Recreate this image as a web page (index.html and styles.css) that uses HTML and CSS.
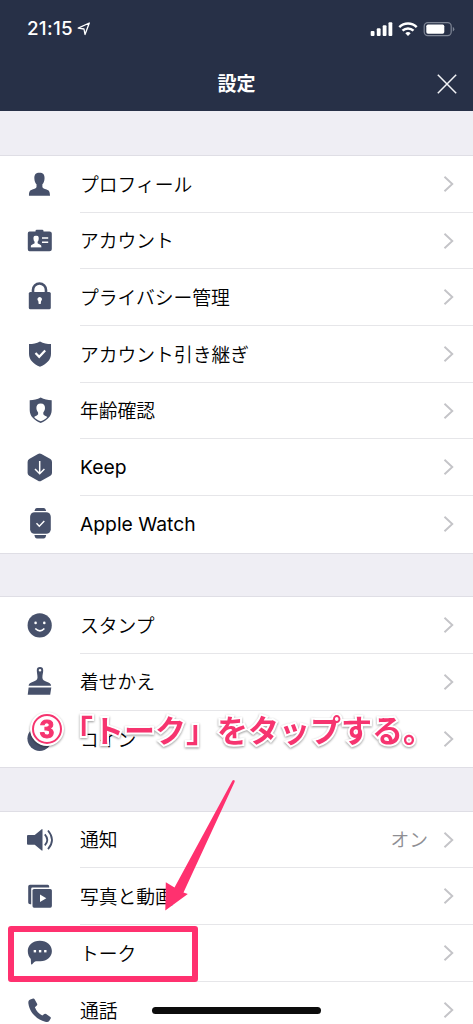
FILE: index.html
```html
<!DOCTYPE html>
<html lang="ja">
<head>
<meta charset="utf-8">
<title>設定</title>
<link rel="stylesheet" href="styles.css">
</head>
<body>
<svg class="defs" width="0" height="0"><defs>
<symbol id="chev" viewBox="0 0 12 18"><path d="M1.500 1.700 9.300 9l-7.800 7.300" fill="none" stroke="#c4c4c8" stroke-width="1.900"/></symbol>
<symbol id="bust" viewBox="0 0 22 24"><path d="M11 0C7.300 0 5.600 2.400 5.800 6c.1 2.500.8 4.500 2.200 6v2.600c-.2 1.300-2 1.800-4.300 2.700C1 18.300.3 19.500.2 23.600h21.600c-.1-4.100-.8-5.300-3.500-6.300-2.300-.9-4.100-1.400-4.300-2.700V12c1.400-1.500 2.100-3.500 2.200-6C16.400 2.400 14.700 0 11 0Z"/></symbol>
</defs></svg>
<div class="phone">
  <header class="header">
    <div class="status">
      <div class="clock"><span>21:15</span>
        <svg width="14" height="14" viewBox="0 0 14 14"><path d="M1.200 6.200 12.300 1 8 12.500 7 7Z" fill="none" stroke="#fff" stroke-width="1.300" stroke-linejoin="round"/></svg>
      </div>
      <svg class="signals" width="86" height="16" viewBox="0 0 86 16">
        <g fill="#fff"><rect x=".7" y="10" width="3.800" height="5" rx="1"/><rect x="6.800" y="7.300" width="3.800" height="7.700" rx="1"/><rect x="12.700" y="4.300" width="3.800" height="10.700" rx="1"/><rect x="18.500" y="1.200" width="3.800" height="13.800" rx="1"/></g>
        <g fill="none" stroke="#fff" stroke-width="2.500"><path d="M29.300 6.100a12.500 12.500 0 0 1 17.400 0M32.500 9.700a8 8 0 0 1 11 0"/></g>
        <path d="M38 15l-2.700-2.700a4 4 0 0 1 5.400 0Z" fill="#fff"/>
        <rect x="54.200" y="1.600" width="27" height="13" rx="3.600" fill="none" stroke="#7e8595" stroke-width="1.200"/>
        <rect x="56.300" y="3.600" width="18" height="9.200" rx="1.700" fill="#fff"/>
        <path d="M82.800 6v4.400q1.500-.6 1.500-2.200T82.800 6Z" fill="#7e8595"/>
      </svg>
    </div>
    <div class="titlebar"><h1>設定</h1>
      <svg class="close" width="20" height="20" viewBox="0 0 20 20"><path d="m.8.8 18.400 18.400M19.200.8.8 19.200" stroke="#f2f3f6" stroke-width="1.500"/></svg>
    </div>
  </header>

  <main>
  <section class="group">
    <div class="row"><svg class="icon" viewBox="0 0 40 40"><use href="#bust" x="8.700" y="8.600" width="21.500" height="23.500"/></svg><div class="cell"><span>プロフィール</span><svg class="chev"><use href="#chev"/></svg></div></div>
    <div class="row"><svg class="icon" viewBox="0 0 40 40"><path d="M9.500 10.500h6V10q0-1.300 1.300-1.300h5.400q1.300 0 1.300 1.300v.5h6q2.300 0 2.300 2v15.700q0 2-2.300 2h-20q-1.700 0-1.700-2V12.500q0-2 1.700-2Z"/><use class="white" href="#bust" x="10.500" y="14.600" width="11.200" height="12.200"/><path d="M22 17h6.200M22 21.300h6.200" stroke="#fff" stroke-width="1.600"/></svg><div class="cell"><span>アカウント</span><svg class="chev"><use href="#chev"/></svg></div></div>
    <div class="row"><svg class="icon" viewBox="0 0 40 40"><path d="M13 15v-3a6.500 6.500 0 0 1 13 0v3" fill="none" stroke="#47516b" stroke-width="2.600"/><rect x="8.800" y="13.900" width="22" height="17.400" rx="1.600"/><path class="white" d="M19.700 19a2.300 2.300 0 0 1 1.400 4.100l-.4 3h-2l-.4-3a2.300 2.300 0 0 1 1.400-4.100Z"/></svg><div class="cell"><span>プライバシー管理</span><svg class="chev"><use href="#chev"/></svg></div></div>
    <div class="row"><svg class="icon" viewBox="0 0 40 40"><path d="M20 7.400c3.500 1.800 7 2.400 11 2.700v9.700c0 6.300-4.600 10.300-11 13-6.400-2.700-11-6.700-11-13v-9.700c4-.3 7.500-.9 11-2.700Z"/><path d="m15.500 19 3.700 3.800 6-6.200" fill="none" stroke="#fff" stroke-width="2.200"/></svg><div class="cell"><span>アカウント引き継ぎ</span><svg class="chev"><use href="#chev"/></svg></div></div>
    <div class="row"><svg class="icon" viewBox="0 0 40 40"><path d="M20.700 6.600c3.500 1.800 7 2.400 11 2.700V19c0 6.300-4.600 10.300-11 13-6.400-2.700-11-6.700-11-13V9.300c4-.3 7.500-.9 11-2.700Z"/><path class="white" d="M20.700 12.500c-3 0-4.400 1.800-4.300 4.600.1 2 .8 3.500 1.700 4.400v1.700c-.6 1.300-2.600 1.500-4 2.700 1.700 2.200 3.700 3.300 6.600 4.400 2.900-1.100 4.900-2.200 6.600-4.400-1.400-1.200-3.400-1.400-4-2.700v-1.700c.9-.9 1.600-2.400 1.700-4.400.1-2.800-1.300-4.600-4.300-4.600Z"/></svg><div class="cell"><span>年齢確認</span><svg class="chev"><use href="#chev"/></svg></div></div>
    <div class="row"><svg class="icon" viewBox="0 0 40 40"><path d="M18 6.100q1.700-1 3.400 0l9 5q1.600 1 1.600 2.800v11q0 1.800-1.600 2.800l-9 5q-1.700 1-3.400 0l-8.800-5q-1.600-1-1.600-2.800v-11q0-1.800 1.600-2.800Z"/><path d="M19.700 13v12.500m-4.700-4.500 4.700 4.700 4.700-4.700" fill="none" stroke="#fff" stroke-width="1.500"/></svg><div class="cell"><span class="latin">Keep</span><svg class="chev"><use href="#chev"/></svg></div></div>
    <div class="row"><svg class="icon" viewBox="0 0 40 40"><rect x="10.100" y="8.300" width="20.700" height="21.500" rx="4.500"/><path d="M14.400 7q.6-3 2.500-3h6.800q1.900 0 2.500 3ZM14.400 31.100h11.800q-.6 3.500-2.500 3.500h-6.800q-1.900 0-2.500-3.500Z"/><path d="m16.500 19.200 2.800 3 5-5.300" fill="none" stroke="#fff" stroke-width="1.400"/></svg><div class="cell"><span class="latin">Apple Watch</span><svg class="chev"><use href="#chev"/></svg></div></div>
  </section>

  <section class="group">
    <div class="row"><svg class="icon" viewBox="0 0 40 40"><circle cx="19.700" cy="19.400" r="12.100"/><circle class="white" cx="15.600" cy="16.900" r="1.300"/><circle class="white" cx="24.300" cy="16.900" r="1.300"/><path d="M15.300 22.500q4.700 4.800 9.100 0" fill="none" stroke="#fff" stroke-width="1.600"/></svg><div class="cell"><span>スタンプ</span><svg class="chev"><use href="#chev"/></svg></div></div>
    <div class="row"><svg class="icon" viewBox="0 0 40 40"><path fill-rule="evenodd" d="M16.800 8.300a3.200 3.200 0 0 1 6.400 0c0 3-.9 4.700-.8 7.500.1 2.200 1.800 3 4.200 4 2.700 1 4.300 1.700 4.500 4H8.600c.2-2.300 1.900-3 4.500-4 2.400-1 4.300-1.800 4.400-4 .1-2.800-.7-4.500-.7-7.500Zm3.200-1.300a1.300 1.300 0 1 0 0 2.600 1.300 1.300 0 0 0 0-2.600Z"/><path d="M8.600 25.500h22.700l-1.100 7.200h-22.500Z"/></svg><div class="cell"><span>着せかえ</span><svg class="chev"><use href="#chev"/></svg></div></div>
    <div class="row"><svg class="icon" viewBox="0 0 40 40"><circle cx="19.700" cy="19.600" r="12.300"/></svg><div class="cell"><span>コイン</span><svg class="chev"><use href="#chev"/></svg></div></div>
  </section>

  <section class="group">
    <div class="row"><svg class="icon" viewBox="0 0 40 40"><path d="M8 15h6.700l7-5.800q.8-.5.800.5V30q0 1-.8.500l-7-5.700H8q-1 0-1-1V16q0-1 1-1Z"/><path d="M24.800 14.300q5 5.600 0 11M28 10.500q8 9.400 0 18.700" fill="none" stroke="#47516b" stroke-width="1.800"/></svg><div class="cell"><span>通知</span><span class="value">オン</span><svg class="chev"><use href="#chev"/></svg></div></div>
    <div class="row"><svg class="icon" viewBox="0 0 40 40"><path d="M10 7.800h17.700q1.500 0 1.500 1.700v1H12.500q-1.300 0-1.300 1.300v15.500h-1q-2 0-2-1.700V9.500q0-1.700 1.800-1.700Z"/><rect x="12.500" y="12" width="19.400" height="18.700" rx="1.600"/><path class="white" d="m20 17.500 6.300 3.800-6.300 3.800Z"/></svg><div class="cell"><span>写真と動画</span><svg class="chev"><use href="#chev"/></svg></div></div>
    <div class="row"><svg class="icon" viewBox="0 0 40 40"><path d="M19.800 7.700c7.200 0 12.100 4.600 12.100 10.400 0 5.900-4.900 10.200-11.500 10.200h-4.300c-1.500 0-2.700 2-3.900 2.900-.7.500-1.200.2-1.200-.7l-.2-4.500c-1.900-2-3-4.600-3-7.900 0-5.800 4.800-10.400 12-10.400Z"/><g class="white"><rect x="13.700" y="17" width="2.400" height="2.400"/><rect x="18.900" y="17" width="2.400" height="2.400"/><rect x="24.100" y="17" width="2.400" height="2.400"/></g></svg><div class="cell"><span>トーク</span><svg class="chev"><use href="#chev"/></svg></div></div>
    <div class="row"><svg class="icon" viewBox="0 0 40 40"><path d="m10.300 9.500 2.800-.9q1-.2 1.500.7l2.500 4.400q.5 1-.3 1.800l-1.900 1.700c1.500 4 4 6.500 7.400 8.300l2-1.500q1-.7 1.800 0l4.300 3q.8.700.3 1.600l-1.500 2.400c-.7 1-2 1.200-4 .7C16.500 29.500 9.600 22.200 8.400 13.500c-.2-1.900.1-3.300 1.900-4Z"/></svg><div class="cell"><span>通話</span><svg class="chev"><use href="#chev"/></svg></div></div>
  </section>
  </main>

  <div class="homebar"></div>
  <div class="highlight"></div>
  <svg class="arrow" width="80" height="140" viewBox="0 0 80 140"><path d="M72.500 5.400q2.500-1.300 2.200 1.300L23.500 117.500l4.300 1.500L5.300 135.500 5.800 107.200l8.700 5.200Z"/></svg>
  <p class="caption"><span class="step">3</span><span>「トーク」をタップする。</span></p>
</div>
</body>
</html>
```
FILE: styles.css
```css
* { box-sizing: border-box; }
body { margin: 0; font-family: "Noto Sans CJK JP", sans-serif; }
.defs { position: absolute; }
.phone { position: relative; width: 473px; height: 1024px; overflow: hidden; background: #efeef4; }
.header { height: 111px; background: #273047; color: #fff; }
.status { height: 56px; padding: 1px 17px 0 27px; display: flex; align-items: center; justify-content: space-between; }
.clock { display: flex; align-items: center; gap: 4px; font: 500 18.800px Inter, sans-serif; letter-spacing: 0.3px; }
.titlebar { height: 55px; display: grid; grid-template-columns: 1fr auto 1fr; align-items: center; }
.titlebar h1 { grid-column: 2; margin: 0; padding-bottom: 1px; font-size: 19px; font-weight: 700; line-height: 28px; }
.close { justify-self: end; margin-right: 16px; }
.group { margin-top: 44.400px; background: #fff; box-shadow: 0 0 0 1px #dfdee5; }
.group:first-child { margin-top: 45px; }
.row { height: 56.700px; display: flex; align-items: center; padding-left: 20px; }
.icon { width: 40px; height: 40px; flex: none; fill: #47516b; }
.white { fill: #fff; }
.cell { margin-left: 20px; flex: 1; height: 100%; display: flex; align-items: center; padding-right: 18px; border-bottom: 1px solid #e6e6e9; font-size: 18.800px; line-height: 26px; font-weight: 350; color: #000; }
.row:last-child .cell { border-bottom: 0; }
.cell span { padding-bottom: 0.500px; }
.cell .latin { font-family: Inter, sans-serif; font-size: 19.300px; font-weight: 400; padding: 0; }
.value { margin-left: auto; color: #8e8e93; }
.chev { width: 12px; height: 18px; margin-left: auto; }
.value + .chev { margin-left: 15px; }
.homebar { position: absolute; left: 152px; top: 1007px; width: 169px; height: 7px; border-radius: 4px; background: #0c0c0c; }
.highlight { position: absolute; left: 8px; top: 926px; width: 190px; height: 56px; border: 6px solid #ff316f; border-radius: 3px; }
.arrow { position: absolute; left: 160px; top: 775px; fill: #ff316f; }
.caption { position: absolute; left: 32px; top: 707px; margin: 0; display: flex; align-items: center; font-size: 31px; line-height: 44px; font-weight: 700; white-space: nowrap; color: #f6346f; -webkit-text-stroke: 4px #fff; paint-order: stroke fill; filter: drop-shadow(0 1px 1px rgba(0,0,0,.4)); }
.step { width: 30px; height: 30px; border: 2px solid #f6346f; border-radius: 50%; background: #fff; box-shadow: 0 0 0 2px #fff; font: 700 26px/27px "Liberation Sans", sans-serif; text-align: center; -webkit-text-stroke: 1px #f6346f; }
```
